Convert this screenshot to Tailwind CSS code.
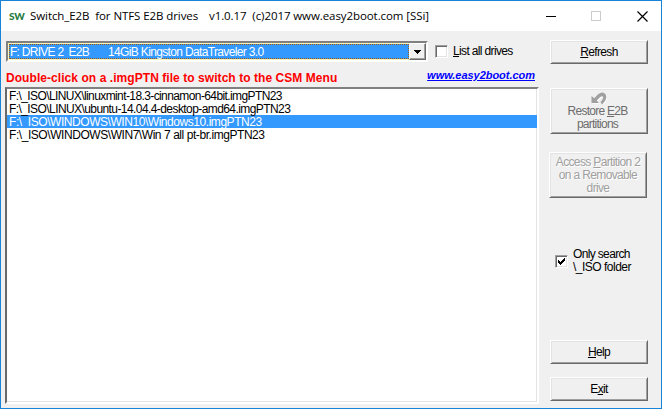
<!DOCTYPE html>
<html lang="en">
<head>
<meta charset="utf-8">
<title>Switch_E2B</title>
<script src="https://cdn.jsdelivr.net/npm/@tailwindcss/browser@4"></script>
</head>
<body class="overflow-hidden">
<div class="flex h-[409px] w-[662px] flex-col border border-[#1883d7] bg-[#f0f0f0] font-['Liberation_Sans',Arial,sans-serif] text-[12px] leading-[13px] tracking-[-0.65px] text-black">
  <header class="flex h-[30px] shrink-0 items-center bg-white pl-2 font-['Open_Sans','Noto_Sans',sans-serif]">
    <span class="w-[21px] pb-px font-['Lato',sans-serif] text-[10px] leading-none font-black tracking-[-0.3px] text-[#1f7a3d]">SW</span>
    <h1 class="flex text-[11.5px] leading-4 tracking-[-0.08px] whitespace-pre"><span class="w-[179px]">Switch_E2B  for NTFS E2B drives</span><span>v1.0.17  (c)2017 www.easy2boot.com [SSi]</span></h1>
    <div class="ml-auto flex items-center pr-[13px]">
      <svg class="mr-[35px]" width="10" height="11" shape-rendering="crispEdges"><path d="M0 5.5H10" stroke="#000"/></svg>
      <svg class="mr-[35px]" width="11" height="11" shape-rendering="crispEdges"><path d="M.5 .5H9.5V9.5H.5Z" fill="none" stroke="#ccc"/></svg>
      <svg width="11" height="11"><path d="M.5 .5L10.5 10.5M10.5 .5L.5 10.5" stroke="#000" stroke-width="1.2"/></svg>
    </div>
  </header>
  <main class="flex grow">
    <section class="flex w-[538px] flex-col pt-[10px] pl-1">
      <div class="ml-px flex h-[21px] items-center">
        <div class="flex h-[21px] w-[422px] border-2 border-t-[#808080] border-r-white border-b-white border-l-[#808080] bg-[#fff3b8]">
          <div class="my-px ml-px flex grow items-center border border-dotted border-[#a05a10] bg-[#3399ff] whitespace-pre text-white"><span class="w-[98px] pt-px tracking-[-0.73px]">F: DRIVE 2  E2B</span><span class="pt-px">14GiB Kingston DataTraveler 3.0</span></div>
          <div class="flex w-[17px] items-center justify-center border border-t-white border-r-[#696969] border-b-[#696969] border-l-white bg-[#f0f0f0] shadow-[inset_-1px_-1px_#a0a0a0]">
            <svg width="7" height="4" shape-rendering="crispEdges"><path d="M0 0H7V1H6V2H5V3H4V4H3V3H2V2H1V1H0Z"/></svg>
          </div>
        </div>
        <span class="ml-[7px] h-[13px] w-[13px] border border-t-[#a0a0a0] border-r-white border-b-white border-l-[#a0a0a0] bg-white shadow-[inset_1px_1px_#696969,inset_-1px_-1px_#e3e3e3]"></span>
        <label class="ml-[5px]"><u>L</u>ist all drives</label>
      </div>
      <div class="mt-[5px] flex h-[20px] justify-between pr-[4px]">
        <strong class="pt-[5px] pl-px tracking-[0.06px] text-[#ff0000]">Double-click on a .imgPTN file to switch to the CSM Menu</strong>
        <a class="pt-[2px] text-[11px] font-bold tracking-[-0.03px] text-[#0000ff] italic underline">www.easy2boot.com</a>
      </div>
      <ul class="h-[317px] w-[534px] border-2 border-t-[#808080] border-r-white border-b-white border-l-[#696969] bg-white shadow-[inset_-1px_-1px_#e3e3e3]">
        <li class="h-[13px] pt-px pl-[2px] tracking-[-0.6px]">F:\_ISO\LINUX\linuxmint-18.3-cinnamon-64bit.imgPTN23</li>
        <li class="h-[13px] pt-px pl-[2px] tracking-[-0.58px]">F:\_ISO\LINUX\ubuntu-14.04.4-desktop-amd64.imgPTN23</li>
        <li class="h-[13px] bg-[#3399ff] pt-px pl-[2px] tracking-[-0.45px] text-white">F:\_ISO\WINDOWS\WIN10\Windows10.imgPTN23</li>
        <li class="h-[13px] pt-px pl-[2px] tracking-[-0.44px]">F:\_ISO\WINDOWS\WIN7\Win 7 all pt-br.imgPTN23</li>
      </ul>
    </section>
    <aside class="flex flex-col pt-[9px] pl-[11px] text-center">
      <button class="h-[24px] w-[98px] border border-t-white border-r-[#696969] border-b-[#696969] border-l-white shadow-[inset_1px_1px_#e3e3e3,inset_-1px_-1px_#a0a0a0]"><u>R</u>efresh</button>
      <button class="mt-6 flex h-[46px] w-[98px] flex-col items-center border border-t-white border-r-[#696969] border-b-[#696969] border-l-white pt-[3px] text-[#6d6d6d] shadow-[inset_1px_1px_#e3e3e3,inset_-1px_-1px_#a0a0a0]">
        <svg class="shrink-0" width="16" height="13"><path d="M.5 4V11H8L5.700 8.600L9 5.300Q11 3.500 12 4.700Q13 6.500 9.500 10L11 12.500Q17 7 14.700 2.500Q12 -1.500 7 2.300L3.300 6.200Z" fill="#fff" transform="translate(.8 .6)"/><path d="M.5 4V11H8L5.700 8.600L9 5.300Q11 3.500 12 4.700Q13 6.500 9.500 10L11 12.500Q17 7 14.700 2.500Q12 -1.500 7 2.300L3.300 6.200Z" fill="#a0a0a0"/></svg>
        <span class="pr-[3px] tracking-[-0.75px]">Restore <u>E</u>2B<br>partitions</span>
      </button>
      <button class="mt-[18px] -ml-px h-[46px] w-[98px] border border-t-white border-r-[#696969] border-b-[#696969] border-l-white text-[#a0a0a0] shadow-[inset_1px_1px_#e3e3e3,inset_-1px_-1px_#a0a0a0] text-shadow-[1px_1px_0_#fff]">Access <u>P</u>artition 2<br>on a Removable<br>drive</button>
      <label class="mt-[50px] ml-[5px] flex items-center text-left">
        <span class="mr-[5px] flex h-[13px] w-[13px] items-center justify-center border border-t-[#a0a0a0] border-r-white border-b-white border-l-[#a0a0a0] bg-white shadow-[inset_1px_1px_#696969,inset_-1px_-1px_#e3e3e3]"><svg width="7" height="7" shape-rendering="crispEdges"><path d="M0 2H1V3H2V4H3V3H4V2H5V1H6V0H7V3H6V4H5V5H4V6H3V7H2V6H1V5H0Z"/></svg></span>
        <span>Only search<br><span class="tracking-[-0.5px]">\_ISO folder</span></span>
      </label>
      <button class="mt-[66px] h-[24px] w-[98px] border border-t-white border-r-[#696969] border-b-[#696969] border-l-white shadow-[inset_1px_1px_#e3e3e3,inset_-1px_-1px_#a0a0a0]"><u>H</u>elp</button>
      <button class="mt-[13px] h-[24px] w-[98px] border border-t-white border-r-[#696969] border-b-[#696969] border-l-white shadow-[inset_1px_1px_#e3e3e3,inset_-1px_-1px_#a0a0a0]">E<u>x</u>it</button>
    </aside>
  </main>
</div>
</body>
</html>
